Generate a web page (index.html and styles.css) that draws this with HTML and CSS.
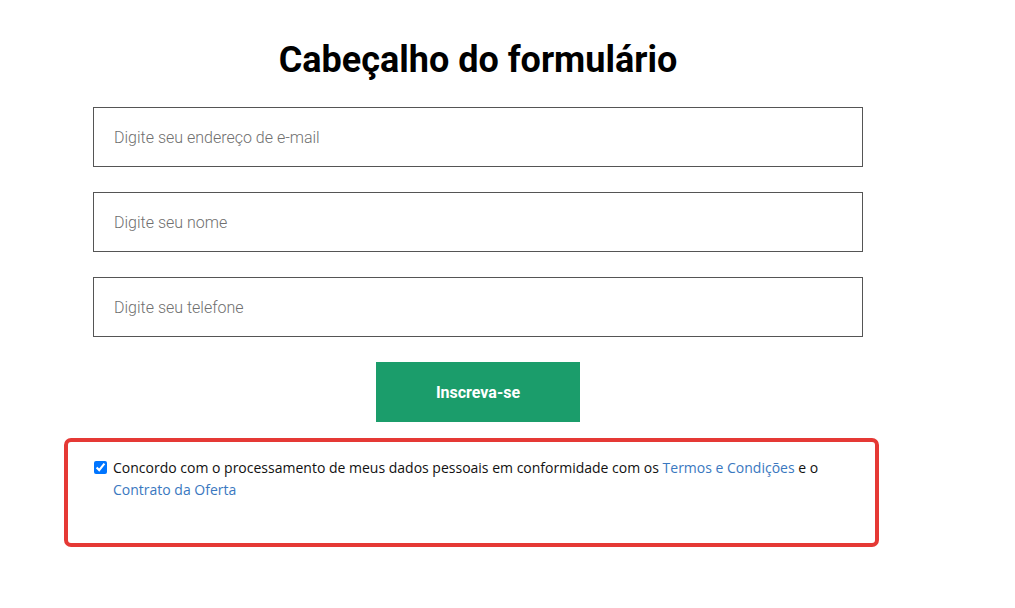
FILE: index.html
```html
<!DOCTYPE html>
<html lang="pt">
<head>
<meta charset="utf-8">
<link rel="stylesheet" href="styles.css">
</head>
<body>
<div class="page">
  <h1 class="title">Cabeçalho do formulário</h1>
  <form class="form">
    <input class="field" type="email" placeholder="Digite seu endereço de e-mail">
    <input class="field" type="text" placeholder="Digite seu nome">
    <input class="field" type="tel" placeholder="Digite seu telefone">
    <button class="submit" type="button">Inscreva-se</button>
    <div class="consent-box">
      <label class="consent">
        <input class="check" type="checkbox" checked>
        <span>Concordo com o processamento de meus dados pessoais em conformidade com os <a class="link" href="#">Termos e Condições</a> e o <a class="link" href="#">Contrato da Oferta</a></span>
      </label>
    </div>
  </form>
</div>
</body>
</html>
```
FILE: styles.css
```css
html, body {
  margin: 0;
  padding: 0;
  background: #fff;
}
.page {
  padding: 39px 0 0 93px;
  width: 770px;
}
.title {
  margin: 0 0 26px;
  font-family: Roboto, "Liberation Sans", sans-serif;
  font-weight: 700;
  font-size: 36px;
  line-height: 42px;
  color: #000;
  text-align: center;
}
.form {
  display: flex;
  flex-direction: column;
  align-items: center;
}
.field {
  box-sizing: border-box;
  width: 770px;
  height: 60px;
  margin: 0 0 25px;
  padding: 0 20px;
  border: 1px solid #555;
  border-radius: 0;
  outline: none;
  font-family: Roboto, "Liberation Sans", sans-serif;
  font-weight: 300;
  font-size: 16px;
  color: #333;
  background: #fff;
}
.field::placeholder {
  color: #6f6f6f;
}
.submit {
  width: 204px;
  height: 60px;
  margin: 0 0 16px;
  border: 0;
  background: #1b9d6b;
  color: #fff;
  font-family: Roboto, "Liberation Sans", sans-serif;
  font-weight: 700;
  font-size: 16px;
  cursor: pointer;
}
.consent-box {
  box-sizing: border-box;
  align-self: flex-start;
  margin-left: -29px;
  width: 815px;
  height: 109px;
  padding: 15px 26px 0 26px;
  border: 4px solid #e53935;
  border-radius: 7px;
}
.consent {
  display: flex;
  align-items: flex-start;
  gap: 6px;
  font-family: "Open Sans", sans-serif;
  font-size: 14px;
  line-height: 22px;
  color: #111;
}
.check {
  flex: none;
  width: 13px;
  height: 13px;
  margin: 4px 0 0;
  accent-color: #0075ff;
}
.link {
  color: #3a78c0;
  text-decoration: none;
}
```
